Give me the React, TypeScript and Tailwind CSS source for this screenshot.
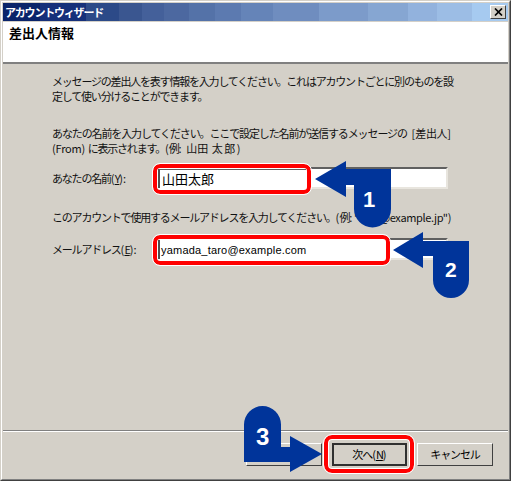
const ff = { fontFamily: '"Noto Sans CJK JP", sans-serif' };

function Arrow({ d, num, x, y, w, h, nx, ny, fs }: { d: string; num: string; x: number; y: number; w: number; h: number; nx: number; ny: number; fs: number }) {
  return (
    <svg className="absolute" style={{ left: x, top: y }} width={w} height={h} viewBox={`${x} ${y} ${w} ${h}`}>
      <path d={d} fill="#00349a" />
      <text x={nx} y={ny} fill="#fff" fontSize={fs} fontWeight="700" fontFamily="Liberation Sans, sans-serif">{num}</text>
    </svg>
  );
}

function L({ children }: { children: string }) {
  return <span className="tracking-[0.1px] [word-spacing:2px]">{children}</span>;
}

function U({ children }: { children: string }) {
  return <span className="underline">{children}</span>;
}

export default function App() {
  const bands = "linear-gradient(to right,#0a246a 0 37px,#16307a 37px 83px,#2c4a88 83px 116px,#3a5690 116px 139px,#44609a 139px 161px,#4c68a0 161px 186px,#5472a8 186px 212px,#5c7ab0 212px 238px,#6584b8 238px 270px,#6f8dbf 270px 316px,#7c9bca 316px 365px,#86a6d2 365px 405px,#92b2dd 405px 434px,#9cbde5 434px 469px,#a6caf0 469px)";
  return (
    <div className="relative w-[511px] h-[481px] overflow-hidden text-black" style={ff}>
      <div className="h-full border border-t-[#d4d0c8] border-l-[#d4d0c8] border-r-[#404040] border-b-[#404040]">
        <div className="h-full border border-t-white border-l-white border-r-[#808080] border-b-[#808080]">
          <div className="h-full border border-[#d4d0c8] bg-[#d4d0c8] flex flex-col">
            <div className="h-[19px] shrink-0 border-b border-b-[#d4d0c8]">
              <div className="h-[18px] flex items-center justify-between pl-[2px] pr-[2px]" style={{ background: bands }}>
                <span className="text-white text-[11px] font-bold tracking-[-1.2px] leading-none">アカウントウィザード</span>
                <div className="w-[16px] h-[14px] bg-[#d4d0c8] border border-t-white border-l-white border-r-[#404040] border-b-[#404040] flex items-center justify-center">
                  <svg width="9" height="8" viewBox="0 0 9 8"><path d="M1 0.5 L8 7.5 M8 0.5 L1 7.5" stroke="#000" strokeWidth="1.7" /></svg>
                </div>
              </div>
            </div>
            <div className="h-[42px] bg-white border-b-2 border-b-[#808080] pl-[6px] shrink-0">
              <div className="text-[13px] font-bold leading-[22px]">差出人情報</div>
            </div>
            <div className="flex-1 pl-[49px] pt-[10px] text-[11px] leading-[15px] tracking-[-1.2px] text-[#111]">
              <p className="whitespace-nowrap">メッセージの差出人を表す情報を入力してください。これはアカウントごとに別のものを設</p>
              <p className="whitespace-nowrap">定して使い分けることができます。</p>
              <p className="whitespace-nowrap mt-[22px] tracking-[-1.12px]">あなたの名前を入力してください。ここで設定した名前が送信するメッセージの<L> [</L><span className="tracking-[-0.3px]">差出人</span><L>]</L></p>
              <p className="whitespace-nowrap"><span className="tracking-[-0.2px]">(From)</span><span className="tracking-[0.1px]"> </span>に表示されます。<L>(</L>例<L>: </L><span className="tracking-[0px]">山田</span><span className="tracking-[1px]"> </span><span className="tracking-[1.5px]">太郎</span><L>)</L></p>
              <div className="flex items-center mt-[11px] h-[22px]">
                <span className="w-[103px] whitespace-nowrap">あなたの名前<L>(</L><U>Y</U><L>):</L></span>
                <div className="w-[293px] h-[22px] bg-white border-2 border-t-[#606060] border-l-[#606060] border-r-[#e8e5de] border-b-[#e8e5de]" />
              </div>
              <p className="whitespace-nowrap mt-[21px]">このアカウントで使用するメールアドレスを入力してください。<L>(</L>例<span className="tracking-[-0.35px]">: "user@example.jp")</span></p>
              <div className="flex items-center mt-[13px] h-[22px]">
                <span className="w-[103px] whitespace-nowrap">メールアドレス<L>(</L><U>E</U><L>):</L></span>
                <div className="w-[293px] h-[22px] bg-white border-2 border-t-[#606060] border-l-[#606060] border-r-[#e8e5de] border-b-[#e8e5de]" />
              </div>
            </div>
            <div className="h-[48px] border-t border-t-[#808080] shadow-[inset_0_1px_0_#fff] flex justify-end items-start gap-[10px] pt-[12px] pr-[15px] shrink-0 text-[11px] tracking-[-1.1px]">
              <button className="w-[76px] h-[23px] bg-[#d4d0c8] border border-t-white border-l-white border-r-[#404040] border-b-[#404040]" />
              <button className="w-[75px] h-[23px] bg-[#d4d0c8] border-2 border-[#303030] leading-none">次へ<L>(</L><U>N</U><L>)</L></button>
              <button className="w-[76px] h-[23px] bg-[#d4d0c8] border border-t-white border-l-white border-r-[#404040] border-b-[#404040] leading-none">キャンセル</button>
            </div>
          </div>
        </div>
      </div>

      {/* annotation overlays */}
      <div className="absolute left-[153px] top-[164px] w-[158px] h-[30px] bg-white border-4 border-[#f00] rounded-[7px] outline outline-1 outline-white flex items-center pl-[5px] text-[13px]">
        <span className="absolute left-[1px] top-[1px] right-[1px] h-[19px] border-t border-t-[#606060] border-l-2 border-l-[#505050]" />
        山田太郎
      </div>
      <div className="absolute left-[153px] top-[235px] w-[237px] h-[30px] bg-white border-4 border-[#f00] rounded-[7px] outline outline-1 outline-white flex items-center pl-[4px] text-[11px] tracking-[0.2px]" style={{ fontFamily: '"Liberation Sans", sans-serif' }}>
        <span className="absolute left-[1px] top-[1px] h-[19px] border-l-2 border-l-[#505050]" />
        yamada_taro@example.com
      </div>
      <div className="absolute left-[324px] top-[435px] w-[90px] h-[38px] border-4 border-[#f00] rounded-[8px] outline outline-1 outline-white shadow-[inset_0_0_0_1px_#fff]" />
      <Arrow x={312} y={158} w={82} h={72} num="1" nx={363} ny={207} fs={22}
        d="M315 179 L346 161 L346 169 L391 169 L391 209 A18.5 18.5 0 0 1 354 209 L354 185 L346 185 L346 197 Z" />
      <Arrow x={390} y={229} w={82} h={72} num="2" nx={445} ny={277} fs={21}
        d="M393 250 L423 232 L423 241 L469 241 L469 280 A18 18 0 0 1 433 280 L433 256 L423 256 L423 268 Z" />
      <Arrow x={242} y={404} w={83} h={70} num="3" nx={256} ny={445} fs={24}
        d="M244 424.5 A18.5 18.5 0 0 1 281 424.5 L281 447 L290 447 L290 436 L322 454 L290 472 L290 462 L244 462 Z" />
    </div>
  );
}
